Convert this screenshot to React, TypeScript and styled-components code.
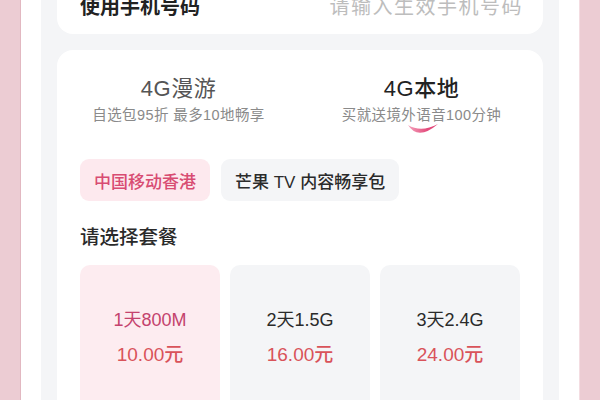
import React from "react";
import styled, { createGlobalStyle } from "styled-components";

const GlobalStyle = createGlobalStyle`
  html, body {
    margin: 0;
    padding: 0;
    background: #ecccd3;
    overflow: hidden;
  }
  body {
    font-family: "Liberation Sans", "Noto Sans CJK SC", sans-serif;
  }
`;

const Frame = styled.div`
  margin: 0 20px;
  height: 400px;
  padding: 0 20px;
  background: #ffffff;
  border-left: 1px solid #e2b8c1;
  border-right: 1px solid #f4dde2;
  box-sizing: border-box;
  overflow: hidden;
`;

const Page = styled.div`
  display: flow-root;
  height: 100%;
  padding: 0 16px;
  background: #f4f5f7;
  box-sizing: border-box;
`;

const Card = styled.div<{ $shift?: number }>`
  background: #ffffff;
  border-radius: 16px;
  margin-top: ${(p) => p.$shift ?? 16}px;
`;

const PhoneRow = styled(Card)`
  display: flex;
  align-items: center;
  justify-content: space-between;
  height: 58px;
  padding: 0 20px 0 23px;
`;

const Label = styled.span`
  font-size: 20px;
  font-weight: 700;
  color: #222;
`;

const Placeholder = styled.span`
  font-size: 20px;
  letter-spacing: 1.5px;
  color: #bdbdbd;
`;

const PlanCard = styled(Card)`
  height: 400px;
  padding-top: 25px;
`;

const Tabs = styled.div`
  display: grid;
  grid-template-columns: 1fr 1fr;
`;

const Tab = styled.div`
  position: relative;
  display: flex;
  flex-direction: column;
  align-items: center;
`;

const TabTitle = styled.div<{ $active?: boolean }>`
  font-size: 22px;
  letter-spacing: 0.5px;
  line-height: 28px;
  font-weight: ${(p) => (p.$active ? 500 : 400)};
  color: ${(p) => (p.$active ? "#222" : "#555")};
`;

const TabSub = styled.div`
  font-size: 14.5px;
  letter-spacing: 0.4px;
  color: #8a8a8a;
`;

const Swoosh = styled.svg`
  position: absolute;
  left: 50%;
  top: 47px;
  margin-left: -16px;
`;

const Body = styled.div`
  padding: 0 23px;
`;

const Chips = styled.div`
  display: flex;
  gap: 11px;
  margin-top: 35px;
`;

const Chip = styled.div<{ $active?: boolean }>`
  display: flex;
  align-items: center;
  height: 42px;
  padding: 0 14px;
  border-radius: 9px;
  font-size: 17px;
  font-weight: 500;
  background: ${(p) => (p.$active ? "#fde9ee" : "#f4f5f7")};
  color: ${(p) => (p.$active ? "#d84c72" : "#2b2b2b")};
`;

const SectionTitle = styled.div`
  margin-top: 23px;
  font-size: 19.5px;
  font-weight: 500;
  color: #2a2a2a;
  line-height: 26px;
`;

const Packages = styled.div`
  display: grid;
  grid-template-columns: repeat(3, 140px);
  justify-content: space-between;
  margin-top: 15px;
`;

const Package = styled.div<{ $active?: boolean }>`
  height: 160px;
  border-radius: 10px;
  background: ${(p) => (p.$active ? "#fdecf0" : "#f4f5f7")};
  display: flex;
  flex-direction: column;
  align-items: center;
  padding-top: 43px;
  box-sizing: border-box;
`;

const PkgName = styled.div<{ $active?: boolean }>`
  font-size: 18px;
  line-height: 24px;
  color: ${(p) => (p.$active ? "#c4436d" : "#2a2a2a")};
`;

const PkgPrice = styled.div`
  margin-top: 11px;
  font-size: 19px;
  font-weight: 500;
  line-height: 24px;
  color: #d9535a;
`;

const packages = [
  { name: "1天800M", price: "10.00元", active: true },
  { name: "2天1.5G", price: "16.00元" },
  { name: "3天2.4G", price: "24.00元" },
];

export default function App() {
  return (
    <>
      <GlobalStyle />
      <Frame>
        <Page>
          <PhoneRow $shift={-24}>
            <Label>使用手机号码</Label>
            <Placeholder>请输入生效手机号码</Placeholder>
          </PhoneRow>
          <PlanCard>
            <Tabs>
              <Tab>
                <TabTitle>4G漫游</TabTitle>
                <TabSub>自选包95折 最多10地畅享</TabSub>
              </Tab>
              <Tab>
                <TabTitle $active>4G本地</TabTitle>
                <TabSub>买就送境外语音100分钟</TabSub>
                <Swoosh width="34" height="16" viewBox="0 0 34 16">
                  <defs>
                    <linearGradient id="sw" x1="0" y1="0" x2="1" y2="0">
                      <stop offset="0" stopColor="#f4a3bd" />
                      <stop offset="0.6" stopColor="#e4507f" />
                      <stop offset="1" stopColor="#e03f73" />
                    </linearGradient>
                    <filter id="bl">
                      <feGaussianBlur stdDeviation="0.7" />
                    </filter>
                  </defs>
                  <path
                    d="M2 3 Q12 19 32 2 Q15 11 2 3 Z"
                    fill="url(#sw)"
                    filter="url(#bl)"
                  />
                </Swoosh>
              </Tab>
            </Tabs>
            <Body>
              <Chips>
                <Chip $active>中国移动香港</Chip>
                <Chip>芒果 TV 内容畅享包</Chip>
              </Chips>
              <SectionTitle>请选择套餐</SectionTitle>
              <Packages>
                {packages.map((p) => (
                  <Package key={p.name} $active={p.active}>
                    <PkgName $active={p.active}>{p.name}</PkgName>
                    <PkgPrice>{p.price}</PkgPrice>
                  </Package>
                ))}
              </Packages>
            </Body>
          </PlanCard>
        </Page>
      </Frame>
    </>
  );
}
